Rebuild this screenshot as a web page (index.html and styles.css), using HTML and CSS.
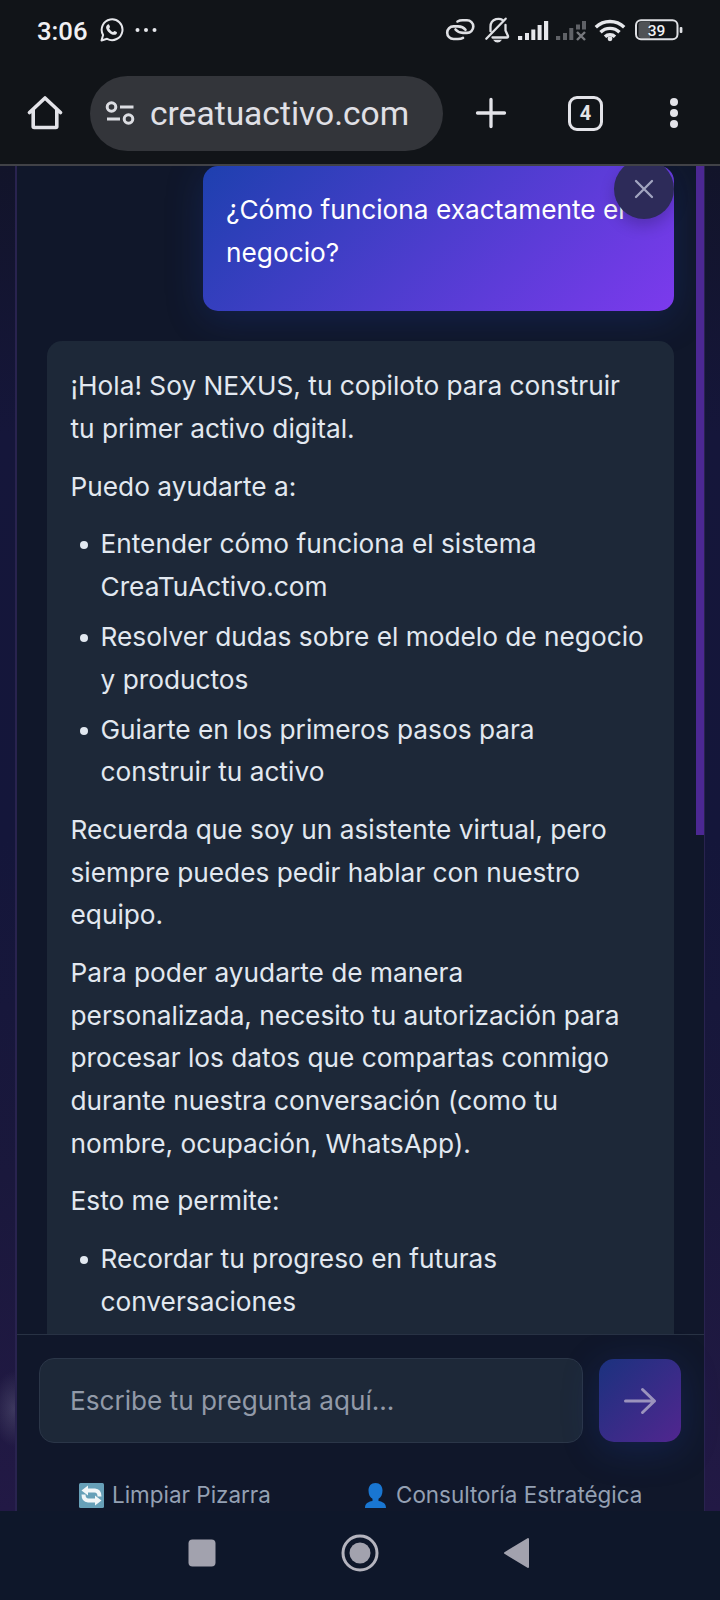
FILE: index.html
```html
<!DOCTYPE html>
<html lang="es">
<head>
<meta charset="utf-8">
<title>creatuactivo.com</title>
<link rel="stylesheet" href="styles.css">
</head>
<body>
<div class="screen">
  <header class="statusbar">
    <span class="time">3:06</span>
    <svg class="wa" width="24" height="24" viewBox="0 0 24 24"><path d="M1.5 22.5l1.6-5.6a10.4 10.4 0 1 1 4 3.9z" fill="none" stroke="#e6e7eb" stroke-width="2" stroke-linejoin="round"/><path d="M7.2 7c.9-1.2 1.8-.9 2.100.1l.7 1.700c.2.500-.7 1.200-.8 1.700.8 1.600 2 2.800 3.700 3.500.6-.1 1.200-1.300 1.800-1.100l2 1c.6.4.1 1.900-.8 2.500-1.200.8-3 .5-5-.5-2.300-1.200-4-3.400-4.600-5.300-.4-1.400 0-2.700.9-3.600z" fill="#e6e7eb"/></svg>
    <svg class="dots" width="22" height="6" viewBox="0 0 22 6" fill="#e6e7eb"><circle cx="2.500" cy="3" r="2"/><circle cx="11" cy="3" r="2"/><circle cx="19.500" cy="3" r="2"/></svg>
    <svg class="indicators" width="250" height="40" viewBox="440 10 250 40">
      <g fill="none" stroke="#dfe0e4" stroke-width="2.600" stroke-linecap="round">
        <path d="M457.500 21.500q2-1.200 5-1.200H467a6.300 6.300 0 0 1 0 12.600H463q-5-.2-7.500-3.400"/>
        <path d="M463 37.800q-2 1.200-5 1.200H453.500a6.300 6.300 0 0 1 0-12.600H458q5 .2 7.500 3.400"/>
      </g>
      <g fill="none" stroke="#dfe0e4" stroke-width="2.300" stroke-linecap="round" stroke-linejoin="round">
        <path d="M502.500 20q-2.500-1.700-6.500-.8c-4 1.300-5.500 4-5.500 7.500v4.500M505.500 25v5.500l2.500 5.500q.3 1.500-1 1.500H492.500M486.300 38.700L505.700 18.700"/>
      </g>
      <path d="M493 39.800h9q-1.500 2.700-4.500 2.700t-4.500-2.700z" fill="#dfe0e4"/>
      <g fill="#e6e7eb"><rect x="518" y="36" width="4.200" height="4"/><rect x="525" y="33" width="4" height="7"/><rect x="531.300" y="29.500" width="4" height="10.500"/><rect x="537.600" y="25" width="4" height="15"/><rect x="544" y="21" width="4.200" height="19"/></g>
      <g fill="#606267"><rect x="556" y="36" width="4.200" height="4"/><rect x="563" y="33" width="4" height="7"/><rect x="569.300" y="28" width="4" height="12"/><rect x="576" y="24.500" width="4" height="5"/><rect x="582" y="21" width="4" height="8.500"/></g>
      <path d="M577 32l8 8m0-8l-8 8" stroke="#77797e" stroke-width="2.400"/>
      <g fill="none" stroke="#e6e7eb" stroke-width="3.400"><path d="M595.800 27.200a20.500 20.500 0 0 1 28.400 0"/><path d="M600.500 32.300a13.500 13.500 0 0 1 19 0"/><path d="M605 36.800a7.200 7.200 0 0 1 10 0"/></g>
      <circle cx="610" cy="38.800" r="2.400" fill="#e6e7eb"/>
      <path d="M641 22h9v16h-9a2.500 2.500 0 0 1-2.500-2.500v-11a2.500 2.500 0 0 1 2.500-2.500z" fill="#505256"/>
      <rect x="636" y="20.200" width="41.500" height="19" rx="5" fill="none" stroke="#dfe0e4" stroke-width="2"/>
      <rect x="679.700" y="27" width="2.700" height="6" rx="1" fill="#dfe0e4"/>
      <text x="656.500" y="35.700" text-anchor="middle" class="batt">39</text>
    </svg>
  </header>
  <div class="toolbar">
    <svg class="home" width="36" height="36" viewBox="0 0 36 36" fill="none" stroke="#e3e3e8" stroke-width="3.600" stroke-linejoin="round" stroke-linecap="round"><path d="M2.500 17.500L18 3l15.500 14.500M6.200 15v16.500a1 1 0 0 0 1 1h21.600a1 1 0 0 0 1-1V15"/></svg>
    <div class="urlbar">
      <svg width="30" height="26" viewBox="0 0 30 26" fill="none" stroke="#dcdde2" stroke-width="3"><circle cx="6.500" cy="7" r="4.300"/><path d="M15 7h13.500M2 19h13"/><circle cx="23.500" cy="19" r="4.300"/></svg>
      <span class="url">creatuactivo.com</span>
    </div>
    <svg class="plus" width="32" height="32" viewBox="0 0 32 32" stroke="#e3e3e8" stroke-width="3.300" stroke-linecap="round"><path d="M16 2.500v27M2.500 16h27"/></svg>
    <span class="tabs">4</span>
    <svg class="menu" width="10" height="32" viewBox="0 0 10 32" fill="#e3e3e8"><circle cx="5" cy="5" r="4"/><circle cx="5" cy="16" r="4"/><circle cx="5" cy="27" r="4"/></svg>
  </div>
  <main class="page">
    <section class="panel">
      <div class="messages">
        <div class="bubble user"><p>¿Cómo funciona exactamente el<br>negocio?</p></div>
        <div class="bubble bot">
          <p>¡Hola! Soy NEXUS, tu copiloto para construir<br>tu primer activo digital.</p>
          <p>Puedo ayudarte a:</p>
          <ul>
            <li>Entender cómo funciona el sistema<br>CreaTuActivo.com</li>
            <li>Resolver dudas sobre el modelo de negocio<br>y productos</li>
            <li>Guiarte en los primeros pasos para<br>construir tu activo</li>
          </ul>
          <p>Recuerda que soy un asistente virtual, pero<br>siempre puedes pedir hablar con nuestro<br>equipo.</p>
          <p>Para poder ayudarte de manera<br>personalizada, necesito tu autorización para<br>procesar los datos que compartas conmigo<br>durante nuestra conversación (como tu<br>nombre, ocupación, WhatsApp).</p>
          <p>Esto me permite:</p>
          <ul><li>Recordar tu progreso en futuras<br>conversaciones</li></ul>
        </div>
        <div class="scrollthumb"></div>
        <div class="close"><svg width="20" height="20" viewBox="0 0 20 20" stroke="#a2a5c0" stroke-width="2.300" stroke-linecap="round"><path d="M2 2l16 16M18 2L2 18"/></svg></div>
      </div>
      <footer class="composer">
        <div class="row">
          <div class="input">Escribe tu pregunta aquí...</div>
          <div class="send"><svg width="34" height="28" viewBox="0 0 34 28" fill="none" stroke="#9b93bd" stroke-width="3" stroke-linecap="round" stroke-linejoin="round"><path d="M2.500 14h29M19.500 2.500L31.500 14l-12 11.500"/></svg></div>
        </div>
        <div class="links">
          <span class="link"><svg width="25" height="25" viewBox="0 0 25 25"><rect width="25" height="25" rx="1.500" fill="#67a0b8"/><path d="M2.500 7.500L9 2.500V5.500h7q6.500.5 6.500 8h-4q0-4-3-4H9v3zM22.500 17.500L16 22.500V19.500H9q-6.500-.5-6.500-8h4q0 4 3 4H16v-3z" fill="#f2f6f8"/></svg>Limpiar Pizarra</span>
          <span class="link"><svg width="23" height="25" viewBox="0 0 23 25" fill="#1976d2"><path d="M11.500 0c4.500 0 7 3 7 7.500 0 4-1.500 7-4 8.300v2.200c4.500.8 7.500 2.500 7.500 7H1c0-4.500 3-6.200 7.500-7v-2.200c-2.500-1.300-4-4.300-4-8.300C4.500 3 7 0 11.500 0z"/></svg>Consultoría Estratégica</span>
        </div>
      </footer>
    </section>
  </main>
  <nav class="navbar">
    <svg width="28" height="28" viewBox="0 0 28 28"><rect x=".5" y=".5" width="27" height="27" rx="4" fill="#a2a2ae"/></svg>
    <svg width="38" height="38" viewBox="0 0 38 38"><circle cx="19" cy="19" r="17" fill="none" stroke="#b4b4be" stroke-width="3"/><circle cx="19" cy="19" r="10.500" fill="#a2a2ae"/></svg>
    <svg width="28" height="32" viewBox="0 0 28 32"><path d="M2 16L25 2v28z" fill="#a2a2ae" stroke="#a2a2ae" stroke-width="2" stroke-linejoin="round"/></svg>
  </nav>
</div>
</body>
</html>
```

FILE: styles.css
```css
* { box-sizing: border-box; }
body { margin: 0; background: #0f172a; font-family: Inter, "Open Sans", sans-serif; }
svg { display: block; flex: none; }
.screen { width: 720px; height: 1600px; display: flex; flex-direction: column; overflow: hidden; background: #111418; }
.statusbar { height: 60px; display: flex; align-items: center; padding-left: 37px; color: #f0f0f3; }
.time { font: 500 25.700px Roboto, sans-serif; width: 63px; padding-top: 2px; white-space: nowrap; }
.dots { margin-left: 11px; }
.indicators { margin-left: auto; margin-right: 30px; }
.batt { font: 500 15.500px Roboto, sans-serif; fill: #f0f0f3; }
.toolbar { height: 106px; border-bottom: 2px solid #414247; display: flex; align-items: center; padding: 2px 0 0 27px; }
.urlbar { width: 353px; height: 75px; border-radius: 38px; background: #33353a; margin-left: 27px; padding-left: 15px; display: flex; align-items: center; }
.url { font: 400 33.550px Roboto, sans-serif; color: #e0e0e6; margin-left: 15px; white-space: nowrap; }
.plus { margin-left: 32px; }
.tabs { width: 35px; height: 35px; border: 3.500px solid #e3e3e8; border-radius: 9px; margin-left: 61px; display: flex; align-items: center; justify-content: center; font: 700 20px Roboto, sans-serif; color: #e3e3e8; }
.menu { margin-left: 66px; }
.page { height: 1345px; flex: none; padding: 0 15px; background: radial-gradient(ellipse 22px 38px at 14px 1243px, rgba(120, 120, 150, .33), transparent), linear-gradient(180deg, #12142a 0, #15163a 20%, #14163a 50%, #1a183c 75%, #221945 100%); }
.panel { height: 100%; border: solid #29234f; border-width: 0 1px 0 2px; background: #10172a; display: flex; flex-direction: column; }
.messages { position: relative; height: 1168px; overflow: hidden; padding: 0 30px; display: flex; flex-direction: column; }
.bubble { border-radius: 15px; font-size: 26.250px; line-height: 42.660px; flex: none; }
.bubble p { margin: 0 0 15px; }
.user { width: 471px; align-self: flex-end; color: #fff; padding: 23px 23px 21.500px; white-space: nowrap; background: linear-gradient(135deg, #1e40af, #7c3aed); box-shadow: 0 7px 37px rgba(30, 64, 175, .26); }
.bot { margin-top: 30px; padding: 24.600px 23.500px; background: #1d2838; color: #e2e8f0; white-space: nowrap; }
.bot ul { margin: 0 0 15px; padding-left: 30px; list-style: none; }
.bot li { margin-bottom: 7.400px; position: relative; }
.bot li::before { content: ""; position: absolute; left: -21px; top: 18px; width: 8px; height: 8px; border-radius: 50%; background: #e2e8f0; }
.bot li:last-child { margin-bottom: 0; }
.scrollthumb { position: absolute; right: 0; top: 0; width: 8px; height: 669px; background: #4c2893; }
.close { position: absolute; right: 30px; top: -7px; width: 60px; height: 60px; border-radius: 50%; background: #2d2b59; box-shadow: 0 7px 15px rgba(0, 0, 0, .2); display: flex; align-items: center; justify-content: center; }
.composer { flex: 1; border-top: 1px solid #283244; padding: 23px 23px 0 22px; }
.row { display: flex; align-items: center; gap: 16px; }
.input { width: 544px; height: 85px; border: 1px solid #2b3648; border-radius: 15px; background: #1d2838; color: #929aa8; padding-left: 30px; font-size: 26.150px; line-height: 83px; }
.send { width: 82px; height: 83px; border-radius: 15px; background: linear-gradient(135deg, #1b327f, #51268f); box-shadow: 0 7px 37px rgba(30, 64, 175, .26); display: flex; align-items: center; justify-content: center; }
.links { display: flex; margin-top: 38px; padding-left: 40px; font-size: 22.450px; line-height: 28px; color: #94a0b3; white-space: nowrap; }
.link { display: flex; align-items: center; gap: 8px; width: 285px; }
.link + .link { gap: 9px; }
.navbar { flex: 1; background: #0e172a; display: flex; align-items: center; justify-content: space-between; padding: 0 189px 5px 188px; }
```
